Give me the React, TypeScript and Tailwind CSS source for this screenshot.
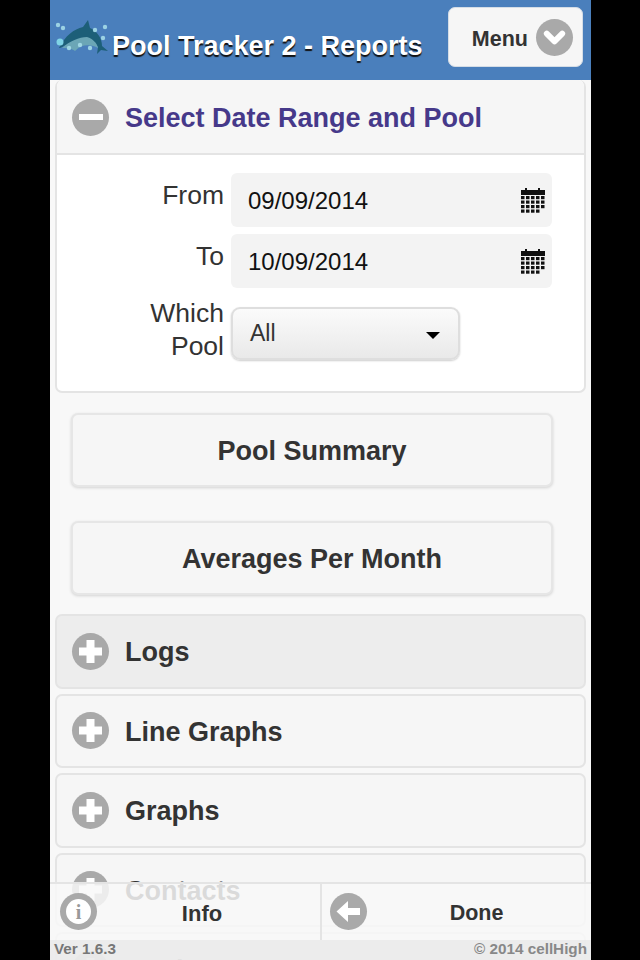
import { ChevronDown } from 'lucide-react';

const FONT = "font-['Liberation_Sans',Arial,sans-serif]";

function RoundIcon({ children, size = 'w-[37px] h-[37px]' }: { children: React.ReactNode; size?: string }) {
  return (
    <span className={`${size} shrink-0 rounded-full bg-[#a9a9a9] flex items-center justify-center`}>
      {children}
    </span>
  );
}

function PlusIcon() {
  return (
    <RoundIcon>
      <svg width="25" height="25" viewBox="0 0 25 25">
        <path d="M8.5 1h8v7.5H24v8h-7.5V24h-8v-7.5H1v-8h7.5z" fill="#fff" />
      </svg>
    </RoundIcon>
  );
}

function MinusIcon() {
  return (
    <RoundIcon>
      <span className="block w-[24px] h-[6px] bg-white" />
    </RoundIcon>
  );
}

function CalendarIcon() {
  const cells = [];
  for (let row = 0; row < 4; row++) {
    for (let col = 0; col < 5; col++) {
      if (row === 3 && col === 4) continue;
      cells.push(<rect key={`${row}-${col}`} x={col * 5} y={8 + row * 4.5} width="3.5" height="3.2" fill="#111" />);
    }
  }
  return (
    <svg width="24" height="25" viewBox="0 0 24 25">
      <path d="M0 2h4V0h2v2h11V0h2v2h5v5H0z" fill="#111" />
      {cells}
    </svg>
  );
}

function DolphinLogo() {
  const bubbles = [
    [3, 7], [8, 10], [50, 9], [48, 20], [40, 12], [25, 27], [35, 30], [14, 30],
  ];
  return (
    <svg width="54" height="38" viewBox="0 0 54 38" className="shrink-0">
      <path d="M4 30C10 18 19 11 28 9L33 2l2 8c7 3 12 10 12 18l6 5-7-1-4 4 1-7c-3-6-9-8-17-6-9 1-15 4-21 7z" fill="#1d5f78" />
      <path d="M7 30c8-7 17-11 25-11 6 2 10 6 11 11-7-4-17-4-23 3-4-3-9-3-13-3z" fill="#6ba6b6" />
      <circle cx="5" cy="24" r="3.5" fill="#7fd3e6" />
      {bubbles.map(([x, y]) => (
        <circle key={`${x}-${y}`} cx={x} cy={y} r="2.2" fill="#a5dbe8" opacity="0.9" />
      ))}
    </svg>
  );
}

function Collapsed({ label, active }: { label: string; active?: boolean }) {
  return (
    <div className={`mx-[5px] h-[74.5px] rounded-[7px] border-2 border-[#e4e4e4] ${active ? 'bg-[#ededed]' : 'bg-[#f6f6f6]'} flex items-center pl-[15px] gap-[16px]`}>
      <PlusIcon />
      <span className="pt-[2px] text-[27px] font-bold text-[#333]">{label}</span>
    </div>
  );
}

function DateField({ label, value }: { label: string; value: string }) {
  return (
    <div className="flex h-[54px] items-start">
      <span className="w-[176px] text-right pr-[7px] pt-[6px] text-[26.5px] leading-[33px] text-[#333]">{label}</span>
      <div className="w-[321px] h-[54px] rounded-[6px] bg-[#f3f3f3] flex items-center justify-between pl-[17px] pr-[7px]">
        <span className="pt-[2px] text-[24px] text-[#111]">{value}</span>
        <CalendarIcon />
      </div>
    </div>
  );
}

function BigButton({ label }: { label: string }) {
  return (
    <div className="ml-[21px] w-[482px] h-[74px] pt-[2px] rounded-[7px] border-2 border-[#e6e6e6] bg-[#f6f6f6] shadow-[0_1px_3px_rgba(0,0,0,0.15)] flex items-center justify-center text-[27px] font-bold text-[#333]">
      {label}
    </div>
  );
}

export default function App() {
  return (
    <div className={`h-[960px] w-[640px] overflow-hidden bg-black pl-[50px] ${FONT}`}>
      <div className="relative h-[960px] w-[541px] overflow-hidden bg-[#f8f8f8]">
        {/* Header */}
        <div className="h-[80px] bg-[#4a7fbc] flex items-center pl-[5px] pr-[8px]">
          <div className="mb-[6px]">
            <DolphinLogo />
          </div>
          <h1 className="ml-[3px] pt-[13px] text-[27px] font-bold text-white whitespace-nowrap [text-shadow:0_2px_1px_#111]">
            Pool Tracker 2 - Reports
          </h1>
          <div className="ml-auto mb-[6px] h-[60px] w-[135px] rounded-[7px] bg-[#f6f6f6] border border-[#d5dde6] flex items-center justify-end pr-[9px] gap-[8px]">
            <span className="pt-[4px] text-[21.5px] font-bold text-[#333]">Menu</span>
            <RoundIcon>
              <ChevronDown size={31} color="#fff" strokeWidth={4.5} />
            </RoundIcon>
          </div>
        </div>

        {/* Date range panel */}
        <div className="mx-[5px] h-[313px] rounded-[7px] border-2 border-t-0 border-[#e4e4e4] bg-white overflow-hidden">
          <div className="h-[75px] pt-[1px] bg-[#f6f6f6] border-b-2 border-[#e4e4e4] flex items-center pl-[15px] gap-[16px]">
            <MinusIcon />
            <span className="pt-[2px] text-[27px] font-bold text-[#46398a]">Select Date Range and Pool</span>
          </div>
          <div className="pt-[18px] flex flex-col gap-[7px] -ml-[2px]">
            <DateField label="From" value="09/09/2014" />
            <DateField label="To" value="10/09/2014" />
            <div className="flex items-start mt-[2px]">
              <span className="w-[176px] text-right pr-[7px] text-[26.5px] leading-[33px] text-[#333]">
                Which<br />Pool
              </span>
              <div className="mt-[10px] w-[229px] h-[53px] rounded-[9px] border-2 border-[#dedede] bg-gradient-to-b from-[#fbfbfb] to-[#e9e9e9] shadow-[0_1px_2px_rgba(0,0,0,0.2)] flex items-center justify-between pl-[17px] pr-[18px]">
                <span className="text-[23px] text-[#333]">All</span>
                <span className="w-0 h-0 mt-[4px] border-x-[7px] border-x-transparent border-t-[7px] border-t-black" />
              </div>
            </div>
          </div>
        </div>

        <div className="mt-[20px]">
          <BigButton label="Pool Summary" />
        </div>
        <div className="mt-[34px]">
          <BigButton label="Averages Per Month" />
        </div>

        <div className="mt-[19px] flex flex-col gap-[5px]">
          <Collapsed label="Logs" active />
          <Collapsed label="Line Graphs" />
          <Collapsed label="Graphs" />
          <Collapsed label="Contacts" />
          <Collapsed label="Pools" />
        </div>

        {/* Fixed footer, see-through over the list */}
        <div className="absolute inset-x-0 bottom-0 h-[78px]">
          <div className="h-[58px] bg-[#f8f8f8]/85 border-t-2 border-[#e4e4e4] flex">
            <div className="relative w-[272px] border-r-2 border-[#e4e4e4] flex items-center justify-center pl-[34px] pt-[2px] text-[22px] font-bold text-[#333]">
              <span className="absolute left-[10px] top-[9px]">
                <RoundIcon>
                  <span className="w-[25px] h-[25px] rounded-full bg-white flex items-center justify-center font-['Liberation_Serif',serif] text-[20px] font-bold text-[#999]">
                    i
                  </span>
                </RoundIcon>
              </span>
              Info
            </div>
            <div className="relative flex-1 flex items-center justify-center pl-[40px] pt-[2px] text-[21.5px] font-bold text-[#333]">
              <span className="absolute left-[8px] top-[9px]">
                <RoundIcon>
                  <svg width="25" height="25" viewBox="0 0 25 25">
                    <path d="M0.5 12.5L12 2v7h12v7H12v7z" fill="#fff" />
                  </svg>
                </RoundIcon>
              </span>
              Done
            </div>
          </div>
          <div className="h-[20px] pb-[2px] bg-[#ebebeb]/95 flex items-center justify-between pl-[4px] pr-[4px] text-[15.25px] font-bold text-[#777]">
            <span>Ver 1.6.3</span>
            <span className="text-[#888]">© 2014 cellHigh</span>
          </div>
        </div>
      </div>
    </div>
  );
}
